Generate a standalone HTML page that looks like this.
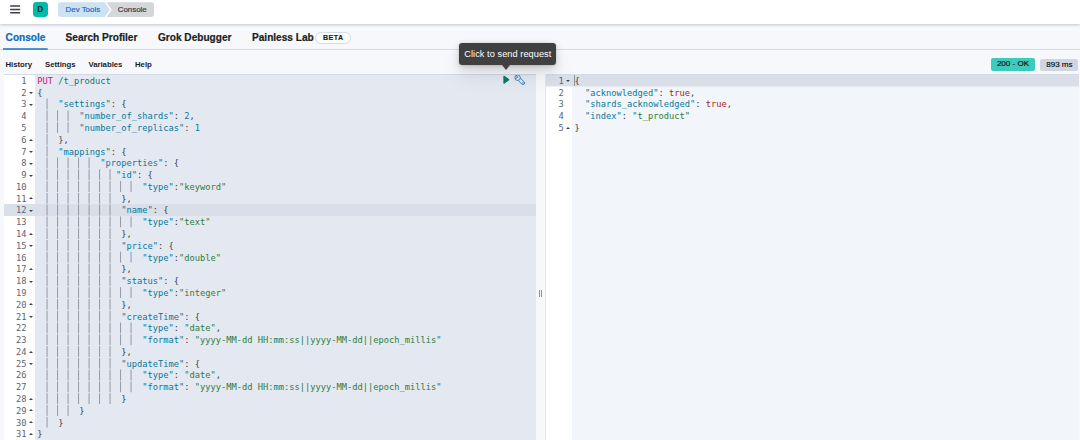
<!DOCTYPE html>
<html lang="en"><head><meta charset="utf-8"><title>Dev Tools - Console</title>
<style>
*{box-sizing:border-box;margin:0;padding:0}
html,body{width:1080px;height:440px;overflow:hidden;background:#f7f8fc;font-family:"Liberation Sans",Arial,sans-serif;color:#1a1c21}
.abs{position:absolute}
#hdr{position:absolute;left:0;top:0;width:1080px;height:24px;background:#fff;box-shadow:0 1px 3px rgba(60,70,100,.28);z-index:5}
.ham{position:absolute;left:10px;width:10.4px;height:1.3px;background:#343741;border-radius:.6px}
.av{position:absolute;left:32.6px;top:2.2px;width:15px;height:15px;border-radius:3.4px;background:#02b9aa;color:#0a2b2b;font-weight:700;font-size:8.2px;line-height:15.4px;text-align:center}
.bc1{position:absolute;left:58px;top:2.3px;height:14.8px;width:52px;background:#cce1f2;border-radius:3px 0 0 3px;clip-path:polygon(0 0,46.6px 0,52px 50%,46.6px 100%,0 100%);color:#1668b0;font-size:7.9px;line-height:15.8px;padding-left:7.6px;-webkit-text-stroke:.15px #1668b0;}
.bc2{position:absolute;left:106.4px;top:2.3px;height:14.8px;width:48px;background:#d4d6d9;border-radius:0 3px 3px 0;clip-path:polygon(0 0,100% 0,100% 100%,0 100%,5.4px 50%);color:#3a3f4a;font-size:7.9px;line-height:15.8px;padding-left:11.4px;-webkit-text-stroke:.2px #3a3f4a;}
#tabs{position:absolute;left:0;top:24px;width:1080px;height:25.8px;border-bottom:1px solid #d5dde9}
.tab{position:absolute;top:0;height:25px;line-height:27.8px;font-weight:700;font-size:10.1px;color:#1a1c21;white-space:nowrap;-webkit-text-stroke:.2px currentColor}
.tab.sel{color:#0a6cbd}
.ul{position:absolute;left:3px;top:24.2px;width:44.7px;height:1.5px;background:#0a6cbd}
.beta{position:absolute;left:315.4px;top:7.9px;height:12.3px;width:35.4px;border:1px solid #d5dbe6;border-radius:6px;background:#fff;font-size:7.1px;font-weight:700;letter-spacing:.5px;-webkit-text-stroke:.15px currentColor;padding-left:.5px;line-height:10.9px;text-align:center;color:#1a1c21}
.mi{position:absolute;top:58px;height:13px;line-height:13px;font-size:7.75px;font-weight:700;color:#1a1c21;white-space:nowrap}
.badge{position:absolute;border-radius:2px;font-size:8.05px;-webkit-text-stroke:.15px #0a0a0a;text-align:center;white-space:nowrap;color:#0a0a0a}
#tip{position:absolute;left:459.4px;top:42.8px;width:96.9px;height:22px;background:#404040;border-radius:3.2px;color:#fff;font-size:9.2px;letter-spacing:.06px;line-height:23px;text-align:center;z-index:9;box-shadow:0 .6px 3px rgba(0,0,0,.12),0 2.3px 8px rgba(0,0,0,.09),0 5.3px 14px rgba(0,0,0,.08),0 14px 22px rgba(0,0,0,.06);white-space:nowrap}
#tip:after{content:"";position:absolute;left:43.1px;top:21.8px;border-left:4.8px solid transparent;border-right:4.8px solid transparent;border-top:5.2px solid #404040}
.ed{position:absolute;top:74px;height:366px;overflow:hidden;font-family:"DejaVu Sans Mono","Liberation Mono",monospace;font-size:8.72px;line-height:11.785px}
.gut{position:absolute;left:0;top:0;height:100%;background:#fff;padding-top:.6px}
.inn{position:absolute;left:2.4px;top:0;right:0;padding-top:.6px}
.bt{position:absolute;left:0;top:0;width:100%;height:1px;background:#ccd6e3;opacity:.85}
.gl{position:relative;height:11.785px;color:#5d6470}
.gl .ln{position:absolute;right:8.4px;top:1.3px}
.gl.act{background:#dbe0e9}
.fd,.fu{position:absolute;right:1.9px;width:0;height:0;border-left:2.1px solid transparent;border-right:2.1px solid transparent}
.fd{top:5.7px;border-top:2.7px solid #3f444e}
.fu{top:5px;border-bottom:2.7px solid #3f444e}
.code{position:absolute;top:0;height:100%}
.cl{position:relative;height:11.785px;white-space:pre}
.cl .tx{position:absolute;top:1.3px}
.gsvg{position:absolute;left:0;top:.6px}
.actl{position:absolute;left:0;height:12px}
#L .code{background:#e4e8f1}
#L .cl.act{background:#d9dee8}
#R .code{background:#f2f5f9}
#R .cl.act{background:#d9dee8}
.m{color:#d4116e}.u{color:#12776e}.v{color:#07799a}.s{color:#2d7d3c}.n{color:#07799a}.b{color:#a51f24}.p{color:#3a3e47}
</style></head><body>
<div id="hdr">
 <svg class="abs" style="left:0;top:0" width="30" height="24" viewBox="0 0 30 24"><path d="M10.7 5.95H19.6M10.7 9.4H19.6M10.7 12.8H19.6" stroke="#3d414c" stroke-width="1.45" stroke-linecap="round" fill="none"/></svg>
 <div class="av">D</div>
 <div class="bc1">Dev Tools</div><div class="bc2">Console</div>
</div>
<div id="tabs">
 <div class="tab sel" style="left:5.6px">Console</div>
 <div class="tab" style="left:65.6px">Search Profiler</div>
 <div class="tab" style="left:158px">Grok Debugger</div>
 <div class="tab" style="left:252px">Painless Lab</div>
 <div class="beta">BETA</div>
 <svg class="abs" style="left:0;top:20px" width="60" height="8" viewBox="0 0 60 8"><path d="M3 4.95H47.7" stroke="#1a70c6" stroke-width="1.6" fill="none"/></svg>
</div>
<div class="mi" style="left:5.4px">History</div>
<div class="mi" style="left:45px">Settings</div>
<div class="mi" style="left:88.4px">Variables</div>
<div class="mi" style="left:135px">Help</div>
<div class="badge" style="left:991px;top:58px;width:44px;height:13.3px;line-height:12.4px;background:#3dcbbd">200 - OK</div>
<div class="badge" style="left:1040.3px;top:59px;width:38.2px;height:12.3px;line-height:12.4px;background:#cfd6e2">893 ms</div>
<div id="tip">Click to send request</div>

<div class="ed" id="L" style="left:3.5px;width:532.5px">
 <div class="gut" style="width:31.3px"><div class="actl" style="top:130px;width:100%;background:#dae0ea"></div>
<div class="gl"><span class="ln">1</span></div>
<div class="gl"><span class="ln">2</span><i class="fd"></i></div>
<div class="gl"><span class="ln">3</span><i class="fd"></i></div>
<div class="gl"><span class="ln">4</span></div>
<div class="gl"><span class="ln">5</span></div>
<div class="gl"><span class="ln">6</span><i class="fu"></i></div>
<div class="gl"><span class="ln">7</span><i class="fd"></i></div>
<div class="gl"><span class="ln">8</span><i class="fd"></i></div>
<div class="gl"><span class="ln">9</span><i class="fd"></i></div>
<div class="gl"><span class="ln">10</span></div>
<div class="gl"><span class="ln">11</span><i class="fu"></i></div>
<div class="gl"><span class="ln">12</span><i class="fd"></i></div>
<div class="gl"><span class="ln">13</span></div>
<div class="gl"><span class="ln">14</span><i class="fu"></i></div>
<div class="gl"><span class="ln">15</span><i class="fd"></i></div>
<div class="gl"><span class="ln">16</span></div>
<div class="gl"><span class="ln">17</span><i class="fu"></i></div>
<div class="gl"><span class="ln">18</span><i class="fd"></i></div>
<div class="gl"><span class="ln">19</span></div>
<div class="gl"><span class="ln">20</span><i class="fu"></i></div>
<div class="gl"><span class="ln">21</span><i class="fd"></i></div>
<div class="gl"><span class="ln">22</span></div>
<div class="gl"><span class="ln">23</span></div>
<div class="gl"><span class="ln">24</span><i class="fu"></i></div>
<div class="gl"><span class="ln">25</span><i class="fd"></i></div>
<div class="gl"><span class="ln">26</span></div>
<div class="gl"><span class="ln">27</span></div>
<div class="gl"><span class="ln">28</span><i class="fu"></i></div>
<div class="gl"><span class="ln">29</span><i class="fu"></i></div>
<div class="gl"><span class="ln">30</span><i class="fu"></i></div>
<div class="gl"><span class="ln">31</span><i class="fu"></i></div>
 </div>
 <div class="code" style="left:31.3px;width:501.2px"><div class="actl" style="top:130px;width:100%;background:#d9dee8"></div><div class="inn">
<svg class="gsvg" width="200" height="366" viewBox="0 0 200 366"><path d="M10.05 23.57V353.55M20.55 35.36V58.92M20.55 82.50V341.76M31.05 35.36V58.92M31.05 82.50V341.76M41.55 82.50V329.98M52.05 82.50V329.98M62.55 94.28V329.98M73.05 94.28V329.98M83.55 106.06V117.85M83.55 141.42V153.21M83.55 176.78V188.56M83.55 212.13V223.91M83.55 247.49V271.06M83.55 294.62V318.19M94.05 106.06V117.85M94.05 141.42V153.21M94.05 176.78V188.56M94.05 212.13V223.91M94.05 247.49V271.06M94.05 294.62V318.19" fill="none" stroke="#8b919f" stroke-width=".9" stroke-dasharray="10.885 0.9"/></svg><div class="cl"><span class="tx" style="left:0.00px"><span class="m">PUT</span><span class="p"> </span><span class="u">/t_product</span></span></div>
<div class="cl"><span class="tx" style="left:0.00px"><span class="p">{</span></span></div>
<div class="cl"><span class="tx" style="left:21.00px"><span class="v">&quot;settings&quot;</span><span class="p">: {</span></span></div>
<div class="cl"><span class="tx" style="left:42.00px"><span class="v">&quot;number_of_shards&quot;</span><span class="p">: </span><span class="n">2</span><span class="p">,</span></span></div>
<div class="cl"><span class="tx" style="left:42.00px"><span class="v">&quot;number_of_replicas&quot;</span><span class="p">: </span><span class="n">1</span></span></div>
<div class="cl"><span class="tx" style="left:21.00px"><span class="p">},</span></span></div>
<div class="cl"><span class="tx" style="left:21.00px"><span class="v">&quot;mappings&quot;</span><span class="p">: {</span></span></div>
<div class="cl"><span class="tx" style="left:63.00px"><span class="v">&quot;properties&quot;</span><span class="p">: {</span></span></div>
<div class="cl"><span class="tx" style="left:78.75px"><span class="v">&quot;id&quot;</span><span class="p">: {</span></span></div>
<div class="cl"><span class="tx" style="left:105.00px"><span class="v">&quot;type&quot;</span><span class="p">:</span><span class="s">&quot;keyword&quot;</span></span></div>
<div class="cl"><span class="tx" style="left:84.00px"><span class="p">},</span></span></div>
<div class="cl"><span class="tx" style="left:84.00px"><span class="v">&quot;name&quot;</span><span class="p">: {</span></span></div>
<div class="cl"><span class="tx" style="left:105.00px"><span class="v">&quot;type&quot;</span><span class="p">:</span><span class="s">&quot;text&quot;</span></span></div>
<div class="cl"><span class="tx" style="left:84.00px"><span class="p">},</span></span></div>
<div class="cl"><span class="tx" style="left:84.00px"><span class="v">&quot;price&quot;</span><span class="p">: {</span></span></div>
<div class="cl"><span class="tx" style="left:105.00px"><span class="v">&quot;type&quot;</span><span class="p">:</span><span class="s">&quot;double&quot;</span></span></div>
<div class="cl"><span class="tx" style="left:84.00px"><span class="p">},</span></span></div>
<div class="cl"><span class="tx" style="left:84.00px"><span class="v">&quot;status&quot;</span><span class="p">: {</span></span></div>
<div class="cl"><span class="tx" style="left:105.00px"><span class="v">&quot;type&quot;</span><span class="p">:</span><span class="s">&quot;integer&quot;</span></span></div>
<div class="cl"><span class="tx" style="left:84.00px"><span class="p">},</span></span></div>
<div class="cl"><span class="tx" style="left:84.00px"><span class="v">&quot;createTime&quot;</span><span class="p">: {</span></span></div>
<div class="cl"><span class="tx" style="left:105.00px"><span class="v">&quot;type&quot;</span><span class="p">: </span><span class="s">&quot;date&quot;</span><span class="p">,</span></span></div>
<div class="cl"><span class="tx" style="left:105.00px"><span class="v">&quot;format&quot;</span><span class="p">: </span><span class="s">&quot;yyyy-MM-dd HH:mm:ss||yyyy-MM-dd||epoch_millis&quot;</span></span></div>
<div class="cl"><span class="tx" style="left:84.00px"><span class="p">},</span></span></div>
<div class="cl"><span class="tx" style="left:84.00px"><span class="v">&quot;updateTime&quot;</span><span class="p">: {</span></span></div>
<div class="cl"><span class="tx" style="left:105.00px"><span class="v">&quot;type&quot;</span><span class="p">: </span><span class="s">&quot;date&quot;</span><span class="p">,</span></span></div>
<div class="cl"><span class="tx" style="left:105.00px"><span class="v">&quot;format&quot;</span><span class="p">: </span><span class="s">&quot;yyyy-MM-dd HH:mm:ss||yyyy-MM-dd||epoch_millis&quot;</span></span></div>
<div class="cl"><span class="tx" style="left:84.00px"><span class="p">}</span></span></div>
<div class="cl"><span class="tx" style="left:42.00px"><span class="p">}</span></span></div>
<div class="cl"><span class="tx" style="left:21.00px"><span class="p">}</span></span></div>
<div class="cl"><span class="tx" style="left:0.00px"><span class="p">}</span></span></div>
 </div>
 <svg class="abs" style="left:467.9px;top:1.4px" width="8" height="9.4" viewBox="0 0 8 9.4"><path d="M.9 1 6.1 4.7.9 8.4z" fill="#087a6e" stroke="#087a6e" stroke-width="1" stroke-linejoin="round"/></svg>
 <svg class="abs" style="left:478.8px;top:.25px" width="13" height="13" viewBox="0 0 13 13"><g fill="#e4e8f1" stroke="#2473bd" stroke-width=".8"><g transform="translate(3.6 3.7) rotate(44)"><rect x="1.6" y="-1.6" width="7.6" height="3.2" rx="1.6"/><circle cx="7.5" cy="0" r=".45" fill="none" stroke-width=".6"/></g><circle cx="3.6" cy="3.7" r="2.75"/><path d="M2.3 1.4 3.7 3.3 1.3 4.6" fill="none" stroke-width=".9"/></g></svg>
 </div>
 <div class="bt"></div>
</div>
<div class="abs" style="left:539.2px;top:290px;width:1.1px;height:7.4px;background:#8a909c"></div>
<div class="abs" style="left:541.4px;top:290px;width:1.1px;height:7.4px;background:#8a909c"></div>
<div class="abs" style="left:544.8px;top:74px;width:.8px;height:366px;background:#e3e7ee"></div>
<div class="ed" id="R" style="left:545.5px;width:533.2px">
 <div class="gut" style="width:26.7px"><div class="actl" style="top:1px;height:11px;width:100%;background:#dae0ea"></div><div class="actl" style="top:12px;height:1px;width:100%;background:#dae0ea;opacity:.4"></div>
<div class="gl"><span class="ln">1</span><i class="fd"></i></div>
<div class="gl"><span class="ln">2</span></div>
<div class="gl"><span class="ln">3</span></div>
<div class="gl"><span class="ln">4</span></div>
<div class="gl"><span class="ln">5</span><i class="fu"></i></div>
 </div>
 <div class="code" style="left:26.7px;width:506.5px"><div class="actl" style="top:1px;height:11px;width:100%;background:#d9dee8"></div><div class="actl" style="top:12px;height:1px;width:100%;background:#d9dee8;opacity:.4"></div><div class="inn">
<div class="cl"><span class="tx" style="left:0.00px"><span class="p">{</span></span></div>
<div class="cl"><span class="tx" style="left:10.50px"><span class="v">&quot;acknowledged&quot;</span><span class="p">: </span><span class="b">true</span><span class="p">,</span></span></div>
<div class="cl"><span class="tx" style="left:10.50px"><span class="v">&quot;shards_acknowledged&quot;</span><span class="p">: </span><span class="b">true</span><span class="p">,</span></span></div>
<div class="cl"><span class="tx" style="left:10.50px"><span class="v">&quot;index&quot;</span><span class="p">: </span><span class="s">&quot;t_product&quot;</span></span></div>
<div class="cl"><span class="tx" style="left:0.00px"><span class="p">}</span></span></div>
 </div><div class="abs" style="left:1.9px;top:1px;width:.8px;height:11.3px;background:#8d929c"></div></div>
 <div class="bt"></div>
</div>
</body></html>
